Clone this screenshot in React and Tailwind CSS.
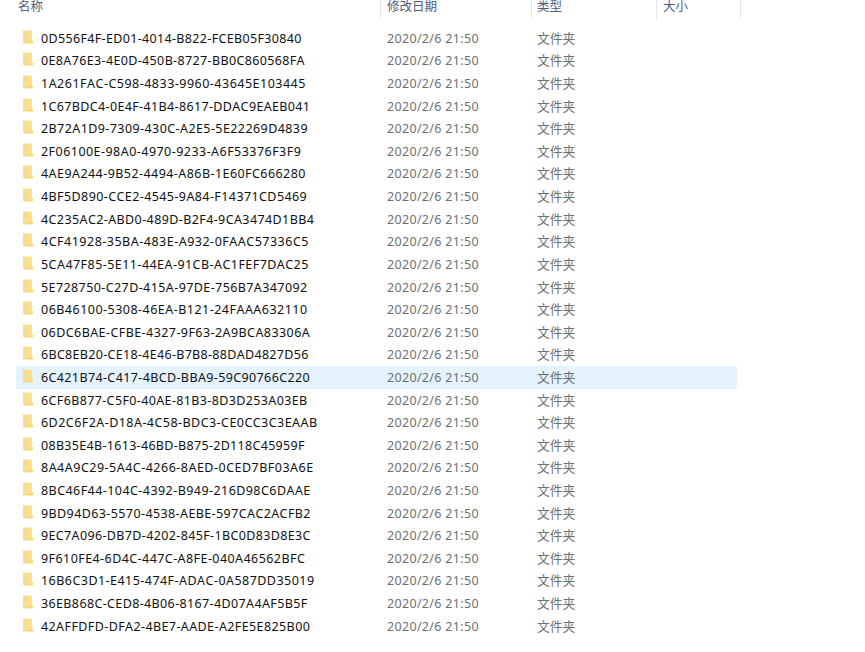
// Each entry is a folder name and the letter spacing of its label, in pixels.
const folders = [
  ["0D556F4F-ED01-4014-B822-FCEB05F30840", 0.34],
  ["0E8A76E3-4E0D-450B-8727-BB0C860568FA", 0.36],
  ["1A261FAC-C598-4833-9960-43645E103445", 0.49],
  ["1C67BDC4-0E4F-41B4-8617-DDAC9EAEB041", 0.36],
  ["2B72A1D9-7309-430C-A2E5-5E22269D4839", 0.42],
  ["2F06100E-98A0-4970-9233-A6F53376F3F9", 0.46],
  ["4AE9A244-9B52-4494-A86B-1E60FC666280", 0.44],
  ["4BF5D890-CCE2-4545-9A84-F14371CD5469", 0.41],
  ["4C235AC2-ABD0-489D-B2F4-9CA3474D1BB4", 0.4],
  ["4CF41928-35BA-483E-A932-0FAAC57336C5", 0.5],
  ["5CA47F85-5E11-44EA-91CB-AC1FEF7DAC25", 0.45],
  ["5E728750-C27D-415A-97DE-756B7A347092", 0.41],
  ["06B46100-5308-46EA-B121-24FAAA632110", 0.48],
  ["06DC6BAE-CFBE-4327-9F63-2A9BCA83306A", 0.43],
  ["6BC8EB20-CE18-4E46-B7B8-88DAD4827D56", 0.31],
  ["6C421B74-C417-4BCD-BBA9-59C90766C220", 0.38],
  ["6CF6B877-C5F0-40AE-81B3-8D3D253A03EB", 0.37],
  ["6D2C6F2A-D18A-4C58-BDC3-CE0CC3C3EAAB", 0.45],
  ["08B35E4B-1613-46BD-B875-2D118C45959F", 0.31],
  ["8A4A9C29-5A4C-4266-8AED-0CED7BF03A6E", 0.49],
  ["8BC46F44-104C-4392-B949-216D98C6DAAE", 0.44],
  ["9BD94D63-5570-4538-AEBE-597CAC2ACFB2", 0.4],
  ["9EC7A096-DB7D-4202-845F-1BC0D83D8E3C", 0.36],
  ["9F610FE4-6D4C-447C-A8FE-040A46562BFC", 0.43],
  ["16B6C3D1-E415-474F-ADAC-0A587DD35019", 0.46],
  ["36EB868C-CED8-4B06-8167-4D07A4AF5B5F", 0.37],
  ["42AFFDFD-DFA2-4BE7-AADE-A2FE5E825B00", 0.4],
];

const SELECTED = "6C421B74-C417-4BCD-BBA9-59C90766C220";

function FolderIcon() {
  return (
    <svg className="mt-[3px] ml-[7px] h-[14px] w-[10px] shrink-0" viewBox="0 0 10 14">
      <path d="M0.3 0.5H8.8V10L9.8 10.5V13.3H0.3Z" fill="#fbdf8c" />
      <path d="M0.3 0.5L3 1.5V13.8L0.3 13Z" fill="#f3dc9a" />
      <path d="M3 12L9.8 10.5V13.3H3Z" fill="#f8d776" />
    </svg>
  );
}

function Header() {
  return (
    <div className="flex h-[19px] text-[12.5px] leading-[14px] text-[#4c607a]">
      <div className="w-[365px] border-r border-[#e3e6ea] pl-[2px]">名称</div>
      <div className="w-[151px] border-r border-[#e3e6ea] pl-[6px]">修改日期</div>
      <div className="w-[125px] border-r border-[#e3e6ea] pl-[5px]">类型</div>
      <div className="w-[84px] border-r border-[#e3e6ea] pl-[6px]">大小</div>
    </div>
  );
}

function Row({ name, spacing, selected }) {
  return (
    <div
      className={`flex h-[22.62px] w-[721px] text-[12.5px] leading-[23px] whitespace-nowrap ${
        selected ? "bg-[#e5f3ff]" : ""
      }`}
    >
      <FolderIcon />
      <div
        className="w-[354px] pl-[8px] text-[#111111] [font-kerning:none]"
        style={{ letterSpacing: `${spacing}px` }}
      >
        {name}
      </div>
      <div className="w-[150px] tracking-[0.32px] text-[#707070]">2020/2/6 21:50</div>
      <div className="text-[12.8px] text-[#707070]">文件夹</div>
    </div>
  );
}

export default function App() {
  return (
    <div className="h-[652px] w-[865px] overflow-hidden bg-white pl-[16px] font-['Noto_Sans','Noto_Sans_CJK_SC',sans-serif]">
      <Header />
      <div className="pt-[7.8px]">
        {folders.map(([name, spacing]) => (
          <Row key={name} name={name} spacing={spacing} selected={name === SELECTED} />
        ))}
      </div>
    </div>
  );
}
